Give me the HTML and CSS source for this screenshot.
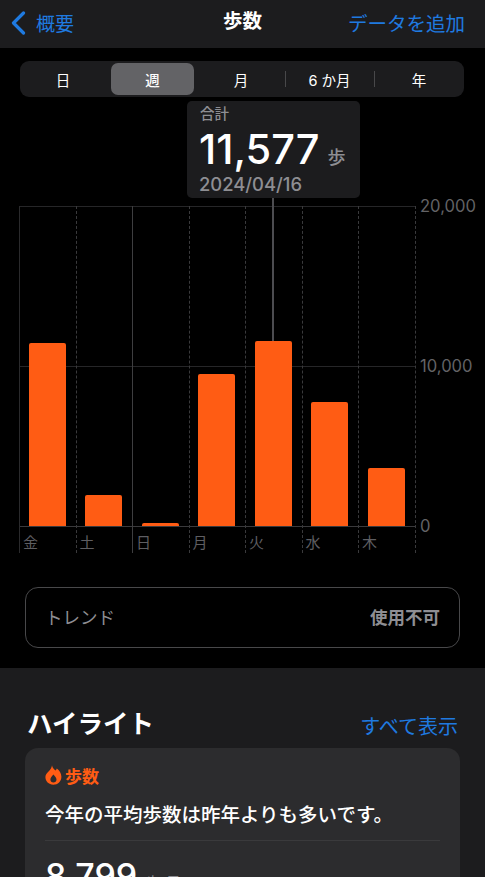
FILE: index.html
```html
<!DOCTYPE html>
<html lang="ja">
<head>
<meta charset="utf-8">
<title>歩数</title>
<link rel="stylesheet" href="styles.css">
</head>
<body>
<div class="screen">
  <header class="nav">
    <a class="back">
      <svg class="chevron" width="16" height="24" viewBox="0 0 16 24"><path d="M13.5 2 L3.5 12 L13.5 22" fill="none" stroke="#1f7ae0" stroke-width="3.200" stroke-linecap="round" stroke-linejoin="round"/></svg>
      <span>概要</span>
    </a>
    <h1 class="nav-title">歩数</h1>
    <a class="nav-action">データを追加</a>
  </header>
  <main class="main">
    <div class="segments">
      <div class="seg seg-first">日</div>
      <div class="seg seg-active">週</div>
      <div class="seg seg-third">月</div>
      <div class="seg seg-rule">6 か月</div>
      <div class="seg seg-rule">年</div>
    </div>
    <div class="chart">
      <div class="hline hline-top"></div>
      <div class="hline hline-mid"></div>
      <div class="hline hline-base"></div>
      <div class="ylabel ylabel-top">20,000</div>
      <div class="ylabel ylabel-mid">10,000</div>
      <div class="ylabel ylabel-base">0</div>
      <div class="columns">
        <div class="col col-solid"><div class="plot"><div class="bar" style="height:183px"></div></div><div class="day">金</div></div>
        <div class="col"><div class="plot"><div class="bar" style="height:31px"></div></div><div class="day">土</div></div>
        <div class="col col-solid"><div class="plot"><div class="bar" style="height:3px"></div></div><div class="day">日</div></div>
        <div class="col"><div class="plot"><div class="bar" style="height:152px"></div></div><div class="day">月</div></div>
        <div class="col"><div class="plot"><div class="bar" style="height:185px"></div></div><div class="day">火</div></div>
        <div class="col"><div class="plot"><div class="bar" style="height:124px"></div></div><div class="day">水</div></div>
        <div class="col col-last"><div class="plot"><div class="bar" style="height:58px"></div></div><div class="day">木</div></div>
      </div>
      <div class="pointer"></div>
      <div class="tip">
        <div class="tip-label">合計</div>
        <div class="tip-value"><span class="tip-num">11,577</span><span class="tip-unit">歩</span></div>
        <div class="tip-date">2024/04/16</div>
      </div>
    </div>
    <div class="trend">
      <span class="trend-name">トレンド</span>
      <span class="trend-state">使用不可</span>
    </div>
  </main>
  <section class="lower">
    <div class="section-head">
      <h2 class="section-title">ハイライト</h2>
      <a class="section-link">すべて表示</a>
    </div>
    <article class="card">
      <div class="card-head">
        <svg class="flame" width="17" height="20" viewBox="0 0 17 20"><path fill-rule="evenodd" d="M7 0.300c0.400 2.600 1.800 3.800 3.600 5.200 0.600-0.500 1-1.200 1.200-2 2.500 1.900 4.600 4.700 4.600 8.200 0 4.600-3.500 8-8.100 8S0.400 16.500 0.400 12.100C0.400 7.600 6.600 5.600 7 0.300Z M8.400 9.600c-1.500 1.700-3 3.100-3 5 0 1.800 1.300 3 3 3s3.100-1.200 3.100-3c0-1.900-1.600-3.300-3.100-5Z" fill="#ff5c14"/></svg>
        <span class="card-tag">歩数</span>
      </div>
      <p class="card-text">今年の平均歩数は昨年よりも多いです。</p>
      <div class="card-rule"></div>
      <div class="stat"><span class="stat-num">8,799</span><span class="stat-unit">歩/日</span></div>
    </article>
  </section>
</div>
</body>
</html>
```

FILE: styles.css
```css
* { box-sizing: border-box; }
html, body { margin: 0; padding: 0; background: #000; }
body {
  font-family: Inter, "Noto Sans CJK JP", sans-serif;
  color: #fff;
}
.screen { width: 485px; height: 877px; overflow: hidden; display: flex; flex-direction: column; }

.nav {
  height: 48px; background: #1c1c1e; flex: none;
  display: flex; align-items: center; justify-content: space-between;
  padding: 0 20px 3px 10px; position: relative;
}
.back { display: flex; align-items: center; gap: 10px; color: #1f7ae0; font-size: 19px; }
.chevron { flex: none; }
.nav-title {
  position: absolute; left: 0; right: 0; top: 7px; margin: 0;
  text-align: center; font-size: 19.5px; line-height: 28px; font-weight: 700;
}
.nav-action { color: #1f7ae0; font-size: 19.5px; }

.main { flex: none; height: 620px; padding: 13px 0 0; }

.segments {
  margin: 0 21px 0 20px; height: 36px; padding: 2px 0;
  background: #1c1c1e; border-radius: 9px;
  display: grid; grid-template-columns: 91px 83px 91px 89px 90px;
}
.seg { display: flex; align-items: center; justify-content: center; font-size: 14.5px; position: relative; }
.seg-first { padding-right: 5px; }
.seg-third { padding-left: 3px; }
.seg-active { background: #636366; border-radius: 7px; font-weight: 500; }
.seg-rule::before {
  content: ""; position: absolute; left: 0; top: 8px; bottom: 8px; width: 1px; background: #48484a;
}

.chart { position: relative; margin: 109px 0 0 19px; width: 396px; height: 345px; }
.hline { position: absolute; left: 0; width: 396px; height: 1px; background: #262628; }
.hline-top { top: 0; }
.hline-mid { top: 160px; }
.hline-base { top: 320px; background: #3a3a3c; }
.ylabel { position: absolute; left: 401px; font-size: 16.6px; line-height: 20px; color: #636366; white-space: nowrap; }
.ylabel-top { top: -10px; }
.ylabel-mid { top: 150px; }
.ylabel-base { top: 310px; }

.columns { position: absolute; inset: 0; display: grid; grid-template-columns: repeat(7, 56.500px); }
.col { border-left: 1px dashed #3a3a3c; position: relative; }
.col-solid { border-left: 1px solid #3e3e40; }
.col-last::after {
  content: ""; position: absolute; left: 56px; top: 0; bottom: 0; border-left: 1px dashed #3a3a3c;
}
.col:first-child { border-left-color: #2a2a2c; }
.plot { height: 320px; display: flex; align-items: flex-end; justify-content: center; padding-right: 1px; }
.bar { width: 37px; background: #ff5c14; border-radius: 2px 2px 0 0; position: relative; }
.day { font-size: 15px; line-height: 20px; margin-top: 7px; padding-left: 3px; color: #5e5e62; }

.pointer { position: absolute; left: 253px; top: -10px; width: 2px; height: 145px; background: #4c4c50; }
.tip {
  position: absolute; left: 168px; top: -105px; width: 173px; height: 97px;
  background: #1c1c1e; border-radius: 5px; padding: 3px 13px;
}
.tip-label { font-size: 14.5px; line-height: 19px; color: #8e8e93; font-weight: 500; }
.tip-value { display: flex; align-items: baseline; height: 46px; margin-top: 3px; }
.tip-num { font-size: 41.5px; line-height: 46px; font-weight: 500; margin-left: -1px; }
.tip-unit { font-size: 18px; color: #8e8e93; margin-left: 8px; font-weight: 500; }
.tip-date { font-size: 18.4px; line-height: 24px; color: #8e8e93; font-weight: 500; margin-left: -1px; }

.trend {
  margin: 36px 25px 0; height: 61px; border: 1px solid #48484a; border-radius: 13px;
  display: flex; align-items: center; justify-content: space-between; padding: 0 19px 3px 19px;
}
.trend-name { font-size: 17.5px; color: #8e8e93; }
.trend-state { font-size: 17.5px; color: #8e8e93; font-weight: 700; }

.lower { flex: 1; background: #1c1c1e; padding: 34px 25px 0; }
.section-head { display: flex; align-items: center; justify-content: space-between; height: 46px; padding: 0 2px 0 2px; }
.section-title { margin: 0 0 2px; font-size: 25.5px; font-weight: 700; line-height: 34px; }
.section-link { color: #1f7ae0; font-size: 20px; margin-top: 1px; }

.card { margin-top: 0; background: #2c2c2e; border-radius: 13px; padding: 15px 20px 0; height: 200px; }
.card-head { display: flex; align-items: center; gap: 3px; height: 24px; }
.flame { flex: none; }
.card-tag { color: #ff5c14; font-size: 17px; font-weight: 700; }
.card-text { margin: 12px 0 0; font-size: 19.5px; line-height: 32px; font-weight: 500; }
.card-rule { height: 1px; background: #3a3a3c; margin-top: 9px; }
.stat { display: flex; align-items: baseline; margin-top: 15px; }
.stat-num { font-size: 34px; line-height: 40px; font-weight: 500; }
.stat-unit { font-size: 15px; color: #8e8e93; margin-left: 8px; }
```
